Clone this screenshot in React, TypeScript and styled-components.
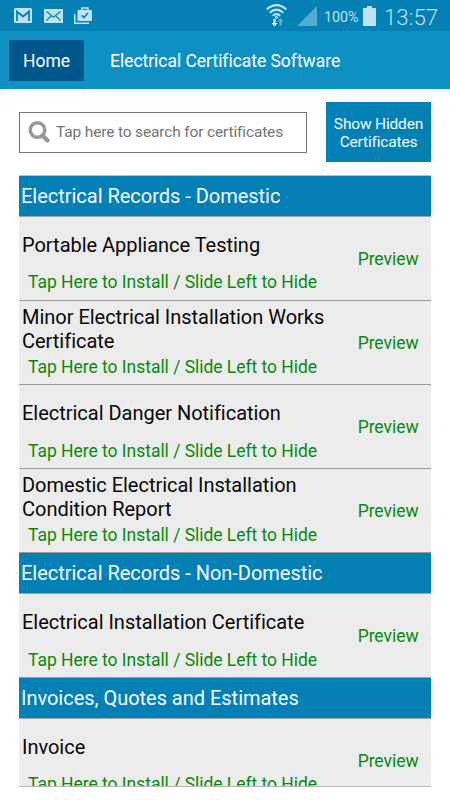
import React from "react";
import styled, { createGlobalStyle } from "styled-components";

const GlobalStyle = createGlobalStyle`
  * { box-sizing: border-box; }
  body { margin: 0; background: #fff; font-family: Roboto, sans-serif; }
`;

const Screen = styled.main`
  width: 450px;
  height: 800px;
  overflow: hidden;
  background: #fff;
`;

const StatusBar = styled.header`
  height: 31px;
  padding: 0 10px 0 14px;
  display: flex;
  align-items: center;
  justify-content: space-between;
  background: #0480b5;
  color: #bfe3f0;
`;

const IconGroup = styled.div`
  display: flex;
  align-items: center;
  height: 31px;
`;

const Glyph = styled.svg<{ $gap?: number }>`
  display: block;
  flex: none;
  margin-right: ${(p) => p.$gap ?? 0}px;
`;

const Battery = styled.span`
  width: 36px;
  margin-right: 3px;
  font-size: 14.3px;
  line-height: 31px;
  padding-top: 3px;
  white-space: nowrap;
`;

const Clock = styled.span`
  width: 56px;
  font-size: 22.3px;
  font-weight: 300;
  line-height: 31px;
  padding-top: 3px;
  white-space: nowrap;
`;

const AppBar = styled.nav`
  height: 58px;
  padding: 9px;
  display: flex;
  align-items: flex-start;
  background: #0f90c3;
  color: #fff;
  font-size: 17.5px;
  line-height: 42px;
`;

const HomeButton = styled.button`
  width: 75px;
  height: 41px;
  padding: 0;
  margin-right: 26px;
  border: 0;
  background: #00578b;
  color: inherit;
  font: inherit;
`;

const AppTitle = styled.span`
  letter-spacing: -0.03px;
  white-space: nowrap;
`;

const Tools = styled.section`
  display: flex;
  align-items: center;
  justify-content: space-between;
  height: 60px;
  margin: 13px 19px 0;
`;

const SearchBox = styled.div`
  width: 288px;
  height: 41px;
  padding-left: 7px;
  display: flex;
  align-items: center;
  border: 1px solid #747474;
  color: #747474;
  font-size: 15.5px;
  letter-spacing: -0.15px;
  white-space: nowrap;
`;

const HiddenButton = styled.button`
  width: 105px;
  height: 60px;
  padding: 1px 0 0;
  border: 0;
  background: #0480b5;
  color: #f4fbff;
  font: 15.5px/18px Roboto, sans-serif;
  letter-spacing: -0.17px;
`;

const List = styled.section`
  height: 612px;
  margin: 13px 19px 0;
  overflow: hidden;
  border-top: 1px solid #c0c0c0;
  border-bottom: 1px solid #b8b8b8;
`;

const SectionHeader = styled.h2`
  height: 40.7px;
  margin: 0;
  padding-left: 2px;
  border-bottom: 1px solid #a0a5aa;
  background: #0480b5;
  color: #f4fbff;
  font-size: 20px;
  letter-spacing: -0.02px;
  font-weight: 400;
  line-height: 41px;
  white-space: nowrap;
`;

const Row = styled.article`
  height: 84.15px;
  display: flex;
  align-items: center;
  justify-content: space-between;
  border-bottom: 1px solid #999;
  background: #ececec;
`;

const Details = styled.div`
  height: 100%;
  padding: 2.7px 0 0 3px;
`;

const Title = styled.div`
  width: 320px;
  height: 51px;
  display: flex;
  align-items: center;
  color: #080808;
  font-size: 20px;
  letter-spacing: -0.02px;
  line-height: 24px;
  white-space: pre-line;
`;

const Hint = styled.div`
  padding-left: 6px;
  color: #08890e;
  font-size: 17.5px;
  letter-spacing: -0.03px;
  line-height: 24px;
`;

const Preview = styled.span`
  margin-right: 12.5px;
  padding-top: 1px;
  color: #08890e;
  font-size: 17.5px;
  letter-spacing: -0.04px;
`;

const sections = [
  {
    name: "Electrical Records - Domestic",
    items: [
      "Portable Appliance Testing",
      "Minor Electrical Installation Works\nCertificate",
      "Electrical Danger Notification",
      "Domestic Electrical Installation\nCondition Report",
    ],
  },
  { name: "Electrical Records - Non-Domestic", items: ["Electrical Installation Certificate"] },
  { name: "Invoices, Quotes and Estimates", items: ["Invoice"] },
];

function NotificationIcons() {
  return (
    <IconGroup>
      <Glyph $gap={12} width="18" height="15" viewBox="0 0 18 15">
        <rect width="18" height="15" rx="1.5" fill="#bfe3f0" />
        <path d="M3 13V3.5l6 5 6-5V13" fill="none" stroke="#0480b5" strokeWidth="1.8" />
      </Glyph>
      <Glyph $gap={11} width="19" height="14" viewBox="0 0 19 14">
        <rect width="19" height="14" fill="#bfe3f0" />
        <path d="M2.5 2.5l7 5.7 7-5.7M2.5 11.5l4.7-4.6M16.5 11.5l-4.7-4.6" fill="none" stroke="#0480b5" strokeWidth="1.2" />
      </Glyph>
      <Glyph width="18" height="17" viewBox="0 0 18 17">
        <path d="M.8 7v9.2H15" fill="none" stroke="#bfe3f0" strokeWidth="1.5" />
        <path d="M8 3V1h6v2" fill="none" stroke="#bfe3f0" strokeWidth="1.5" />
        <rect x="3.5" y="3" width="14.5" height="11" rx="1" fill="#bfe3f0" />
        <path d="M7.7 8.3l2.3 2.2 4-4.5" fill="none" stroke="#0480b5" strokeWidth="1.6" />
      </Glyph>
    </IconGroup>
  );
}

function SystemIcons() {
  return (
    <IconGroup>
      <Glyph $gap={10} width="21" height="23" viewBox="0 0 21 23">
        <g fill="none" stroke="#bfe3f0" strokeWidth="2">
          <path d="M.7 5.5Q10.500-3.2 20.3 5.5M3.7 8.8Q10.500 2.5 17.3 8.8M6.7 11.8Q10.500 8.5 14.3 11.8" />
        </g>
        <path d="M10.500 11.4l2 2-2 1.8-2-1.8z" fill="#bfe3f0" />
        <path d="M7.5 15h2v4h2l-3 3.5-3-3.5h2z" fill="#e3fbff" />
        <path d="M13.5 21.5v-4h-2l3-3.5 3 3.5h-2v4z" fill="#64b6d6" />
      </Glyph>
      <Glyph $gap={7} width="20" height="20" viewBox="0 0 20 20">
        <path d="M0 20L20 0v20z" fill="#54abd0" />
      </Glyph>
      <Battery>100%</Battery>
      <Glyph $gap={8} width="13" height="20" viewBox="0 0 13 20">
        <path d="M4 0h5v2h4v18H0V2h4z" fill="#bfe3f0" />
      </Glyph>
      <Clock>13:57</Clock>
    </IconGroup>
  );
}

export default function App() {
  return (
    <>
      <GlobalStyle />
      <Screen>
        <StatusBar>
          <NotificationIcons />
          <SystemIcons />
        </StatusBar>
        <AppBar>
          <HomeButton>Home</HomeButton>
          <AppTitle>Electrical Certificate Software</AppTitle>
        </AppBar>
        <Tools>
          <SearchBox>
            <Glyph $gap={6} width="23" height="24" viewBox="0 0 23 24">
              <circle cx="10.5" cy="10" r="7.3" fill="none" stroke="#999" strokeWidth="3.5" />
              <path d="M15.5 15.5l5 5" stroke="#999" strokeWidth="4.4" strokeLinecap="round" />
            </Glyph>
            Tap here to search for certificates
          </SearchBox>
          <HiddenButton>
            Show Hidden
            <br />
            Certificates
          </HiddenButton>
        </Tools>
        <List>
          {sections.map((section) => (
            <React.Fragment key={section.name}>
              <SectionHeader>{section.name}</SectionHeader>
              {section.items.map((item) => (
                <Row key={item}>
                  <Details>
                    <Title>{item}</Title>
                    <Hint>Tap Here to Install / Slide Left to Hide</Hint>
                  </Details>
                  <Preview>Preview</Preview>
                </Row>
              ))}
            </React.Fragment>
          ))}
        </List>
      </Screen>
    </>
  );
}
